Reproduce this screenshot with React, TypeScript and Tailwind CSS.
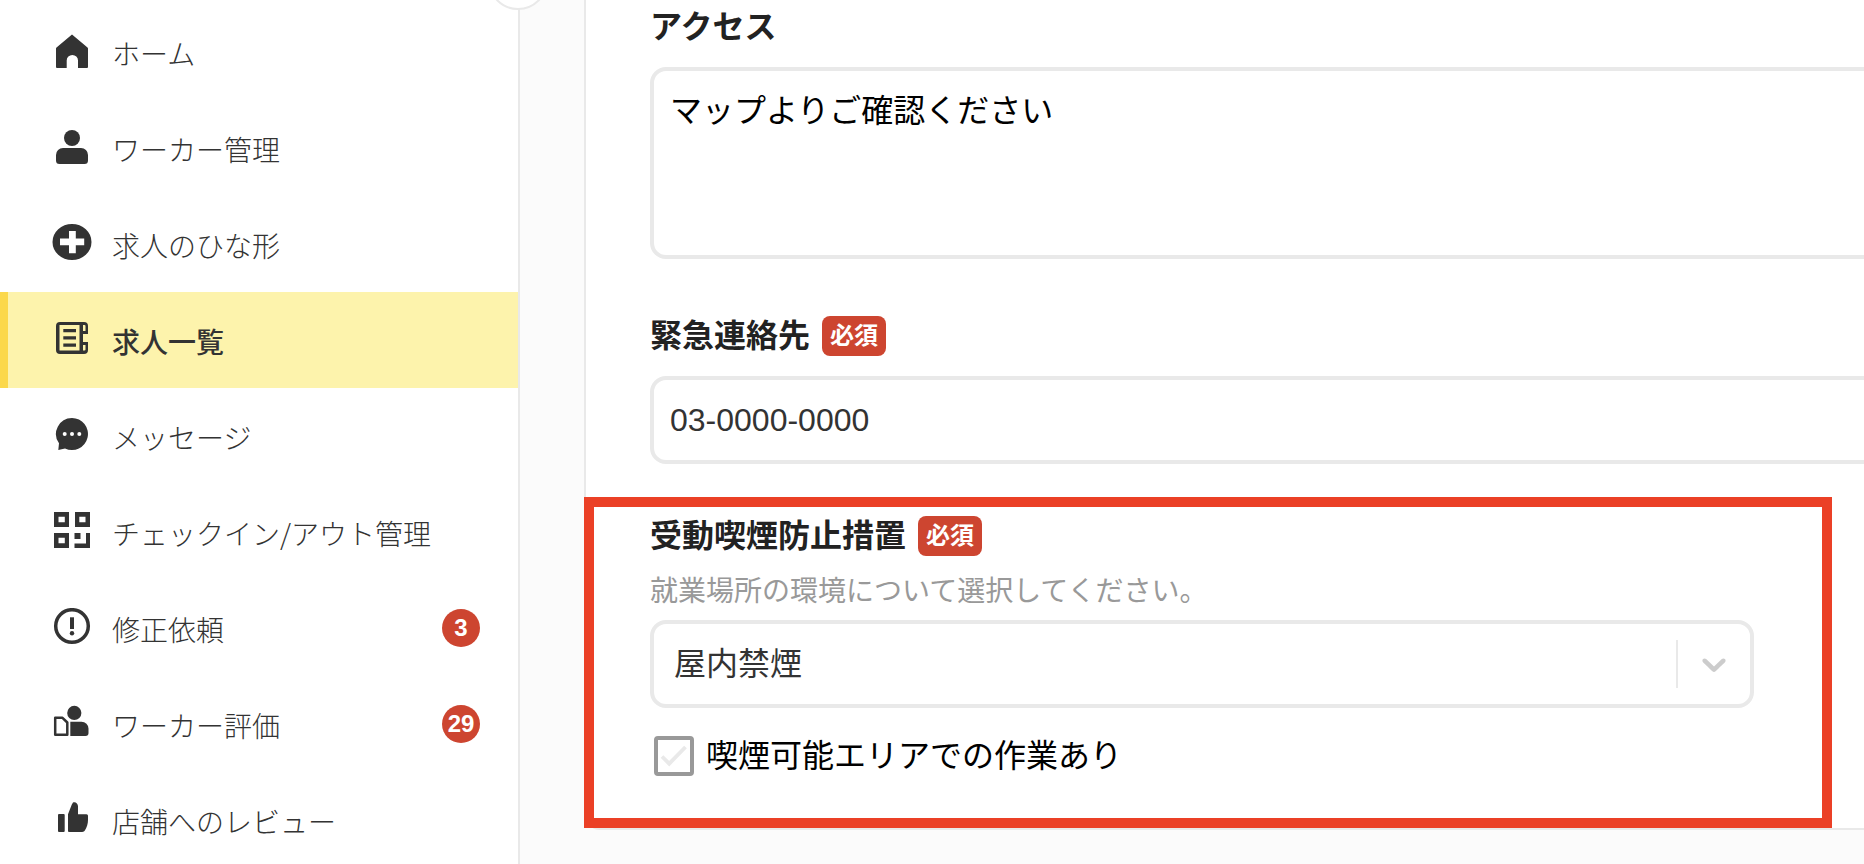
import React, { useState } from 'react';

interface NavItem {
  id: string;
  label: string;
  icon: React.ReactNode;
  badge?: number;
}

const navItems: NavItem[] = [
  {
    id: 'home',
    label: 'ホーム',
    icon: (
      <path d="M20 2.6 4.5 15.6a1.4 1.4 0 0 0-.5 1V35a1 1 0 0 0 1 1h9.700V28.500a5.650 5.500 0 0 1 11.300 0V36H35a1 1 0 0 0 1-1V16.600a1.400 1.400 0 0 0-.5-1Z" />
    ),
  },
  {
    id: 'workers',
    label: 'ワーカー管理',
    icon: (
      <>
        <circle cx="20" cy="10" r="8" />
        <path d="M11 20H29a7 7 0 0 1 7 7V32.500a3.500 3.500 0 0 1-3.500 3.500H7.500A3.500 3.500 0 0 1 4 32.500V27a7 7 0 0 1 7-7Z" />
      </>
    ),
  },
  {
    id: 'templates',
    label: '求人のひな形',
    icon: (
      <path
        fillRule="evenodd"
        d="M20 0a19.500 18 0 1 1 0 36a19.500 18 0 1 1 0-36ZM17 7v7.500H8V21.200H17V29.200H23.800V21.200H32.200V14.500H23.800V7Z"
      />
    ),
  },
  {
    id: 'jobs',
    label: '求人一覧',
    icon: (
      <>
        <path
          fillRule="evenodd"
          d="M8 2H32a4 4 0 0 1 4 4V14H31V22H36V30a4 4 0 0 1-4 4H8a4 4 0 0 1-4-4V6a4 4 0 0 1 4-4ZM7.500 5V30.500H27.500V5ZM31 5V11H33.500V6a1 1 0 0 0-1-1ZM31 25V30.500H32.500a1 1 0 0 0 1-1V25Z"
        />
        <path d="M11.300 9H24v3.200H11.300ZM11.300 16.300H24V19.500H11.300ZM11.300 23.500H24V26.700H11.300Z" />
      </>
    ),
  },
  {
    id: 'messages',
    label: 'メッセージ',
    icon: (
      <>
        <path d="M20 2a16 16 0 1 1-7 30.400L6.300 34 7 27.300A16 16 0 0 1 20 2Z" />
        <g fill="#fff">
          <circle cx="12.700" cy="18" r="2" />
          <circle cx="20" cy="18" r="2" />
          <circle cx="27.300" cy="18" r="2" />
        </g>
      </>
    ),
  },
  {
    id: 'checkin',
    label: 'チェックイン/アウト管理',
    icon: (
      <path
        fillRule="evenodd"
        d="M2 0H17V15H2ZM6.500 4.700V10.300H12.800V4.700ZM23 0H38V15H23ZM27.300 4.700V10.300H33.500V4.700ZM2 21H17V36H2ZM6.500 25.700V31.300H12.800V25.700ZM22.500 21H28.500V27H22.500ZM34 21H38V36H22.500V31.500H34Z"
      />
    ),
  },
  {
    id: 'corrections',
    label: '修正依頼',
    badge: 3,
    icon: (
      <>
        <circle cx="20" cy="18" r="16.300" fill="none" stroke="currentColor" strokeWidth="3.500" />
        <path d="M18 9.300H22V21H18Z" />
        <circle cx="20" cy="25.300" r="2.200" />
      </>
    ),
  },
  {
    id: 'ratings',
    label: 'ワーカー評価',
    badge: 29,
    icon: (
      <>
        <circle cx="22.300" cy="8.900" r="7.100" />
        <path d="M18.300 17.700H29.500a7 7 0 0 1 7 7V29a3 3 0 0 1-3 3H18.300Z" />
        <path
          d="M3.200 13.800H10.500L15.300 18.500V30.700H3.200Z"
          fill="none"
          stroke="currentColor"
          strokeWidth="2.500"
          strokeLinejoin="round"
        />
      </>
    ),
  },
  {
    id: 'reviews',
    label: '店舗へのレビュー',
    icon: (
      <>
        <rect x="6" y="14" width="6.700" height="18" rx="1" />
        <path d="M21 2.500c2.300-1.200 5 1 5 3.800V14.200H34.500a1.500 1.500 0 0 1 1.500 1.500V20c0 3.500-1.200 7.500-3 10.300-.7 1.200-1.500 1.700-2.800 1.700H17a1 1 0 0 1-1-1V14.200L19.700 4.800Z" />
      </>
    ),
  },
];

const RequiredBadge = () => (
  <span className="rounded-lg bg-[#cd4530] px-2 text-2xl font-bold leading-10 text-white">必須</span>
);

interface FieldLabelProps {
  htmlFor: string;
  text: string;
  required?: boolean;
}

const FieldLabel = ({ htmlFor, text, required }: FieldLabelProps) => (
  <div className="flex h-10 items-center gap-3">
    <label htmlFor={htmlFor} className="text-[32px] font-bold leading-10 text-[#222]">
      {text}
    </label>
    {required && <RequiredBadge />}
  </div>
);

const Sidebar = ({ activeId }: { activeId: string }) => {
  return (
    <aside className="relative w-[520px] shrink-0 border-r-2 border-[#e9e9e9] bg-white pt-1">
      <button
        type="button"
        aria-label="メニューを閉じる"
        className="absolute -right-[30px] -top-[50px] size-[60px] rounded-full border-2 border-[#e9e9e9] bg-white"
      />
      <nav>
        {navItems.map((item) => {
          const active = item.id === activeId;
          return (
            <a
              key={item.id}
              href={`#${item.id}`}
              className={`flex h-24 items-center gap-5 border-l-8 pl-11 pr-[38px] text-[28px] leading-10 text-[#333] ${
                active ? 'border-[#fbd84b] bg-[#fdf3ac] font-medium' : 'border-transparent font-light'
              }`}
            >
              <svg viewBox="0 0 40 40" className="size-10 shrink-0" fill="currentColor" aria-hidden="true">
                {item.icon}
              </svg>
              <span className="grow pt-0.5 font-['Noto_Sans_CJK_JP',sans-serif]">{item.label}</span>
              {item.badge && (
                <span className="flex size-[38px] items-center justify-center rounded-full bg-[#cd4530] text-2xl font-bold text-white">
                  {item.badge}
                </span>
              )}
            </a>
          );
        })}
      </nav>
    </aside>
  );
};

export default function App() {
  const [access, setAccess] = useState('マップよりご確認ください');
  const [phone, setPhone] = useState('03-0000-0000');
  const [smoking, setSmoking] = useState('indoor');
  const [smokingArea, setSmokingArea] = useState(false);

  return (
    <div
      lang="ja"
      className="flex h-screen overflow-hidden bg-[#fbfbfb] font-['Liberation_Sans','Noto_Sans_CJK_JP',sans-serif]"
    >
      <Sidebar activeId="jobs" />

      <main className="min-w-0 grow overflow-hidden pl-16">
        <div className="relative -mr-32 rounded-bl-2xl border-b-2 border-l-2 border-[#e9e9e9] bg-white px-16 pb-[52px] pt-[7px]">
          <section>
            <FieldLabel htmlFor="access" text="アクセス" />
            <textarea
              id="access"
              value={access}
              onChange={(e) => setAccess(e.target.value)}
              className="mt-5 block h-48 w-full resize-none rounded-2xl border-4 border-[#e9e9e9] bg-white px-4 py-5 text-[32px] leading-10 text-black outline-none"
            />
          </section>

          <section className="mt-[57px]">
            <FieldLabel htmlFor="phone" text="緊急連絡先" required />
            <input
              id="phone"
              type="tel"
              value={phone}
              onChange={(e) => setPhone(e.target.value)}
              className="mt-5 block h-[88px] w-full rounded-2xl border-4 border-[#e9e9e9] bg-white px-4 text-[32px] text-[#333] outline-none"
            />
          </section>

          <section className="mr-[174px] mt-[52px]">
            <FieldLabel htmlFor="smoking" text="受動喫煙防止措置" required />
            <p className="pb-2 pt-4 text-[28px] leading-10 text-[#999]">就業場所の環境について選択してください。</p>
            <div className="relative">
              <select
                id="smoking"
                value={smoking}
                onChange={(e) => setSmoking(e.target.value)}
                className="block h-[88px] w-full appearance-none rounded-2xl border-4 border-[#e9e9e9] bg-white pl-5 pr-24 text-[32px] text-[#333] outline-none"
              >
                <option value="indoor">屋内禁煙</option>
                <option value="separated">分煙</option>
                <option value="allowed">喫煙可</option>
              </select>
              <div className="pointer-events-none absolute inset-y-5 right-5 flex items-center border-l-2 border-[#e9e9e9] pl-4">
                <svg viewBox="0 0 20 20" className="size-10" fill="#ccc" aria-hidden="true">
                  <path d="M4.516 7.548c0.436-0.446 1.043-0.481 1.576 0l3.908 3.747 3.908-3.747c0.533-0.481 1.141-0.446 1.574 0 0.436 0.445 0.408 1.197 0 1.615-0.406 0.418-4.695 4.502-4.695 4.502-0.217 0.223-0.502 0.335-0.787 0.335s-0.570-0.112-0.789-0.335c0 0-4.287-4.084-4.695-4.502s-0.436-1.170 0-1.615z" />
                </svg>
              </div>
            </div>

            <label className="mt-7 flex h-10 items-center gap-3 pl-1 text-[32px] leading-10 text-black">
              <span className="relative size-10">
                <input
                  type="checkbox"
                  checked={smokingArea}
                  onChange={(e) => setSmokingArea(e.target.checked)}
                  className="peer block size-10 appearance-none rounded border-4 border-[#999] bg-white"
                />
                <svg
                  viewBox="0 0 40 40"
                  className="pointer-events-none absolute inset-0 text-[#e9e9e9] peer-checked:text-[#333]"
                  aria-hidden="true"
                >
                  <path d="M8 20.500 15.200 27.700 31.500 11" fill="none" stroke="currentColor" strokeWidth="3.800" />
                </svg>
              </span>
              喫煙可能エリアでの作業あり
            </label>
          </section>

          {/* highlight frame around the smoking section */}
          <div className="pointer-events-none absolute -left-0.5 bottom-0 right-40 top-[497px] border-10 border-[#eb4026]" />
        </div>
      </main>
    </div>
  );
}
